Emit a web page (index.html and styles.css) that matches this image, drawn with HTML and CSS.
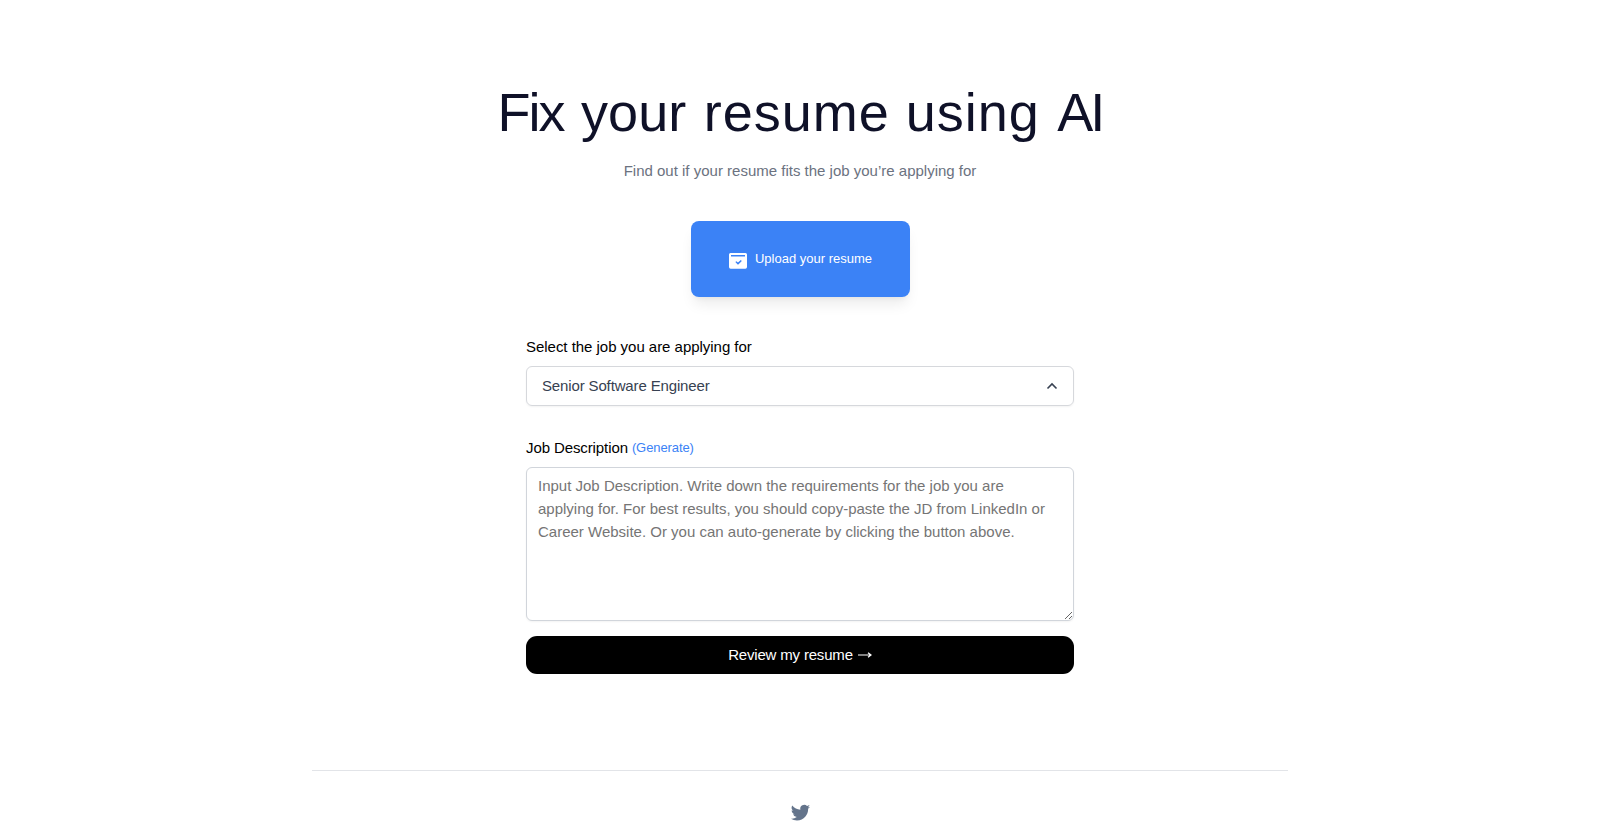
FILE: index.html
```html
<!DOCTYPE html>
<html lang="en">
<head>
<meta charset="utf-8">
<title>Fix your resume using AI</title>
<link rel="stylesheet" href="styles.css">
</head>
<body>
<main class="page">
  <h1 class="title"><span class="tight">Fix</span> your <span class="loose">resume using</span> <span class="initials">AI</span></h1>
  <p class="subtitle">Find out if your resume fits the job you’re applying for</p>
  <button class="upload" type="button">
    <svg class="upload-icon" viewBox="0 0 18 16"><path fill="#fff" fill-rule="evenodd" d="M1.500 0h15Q18 0 18 1.500V14q0 1.700-1.700 1.700H1.700Q0 15.700 0 14V1.500Q0 0 1.500 0ZM2 2v1.500h14V2ZM6.400 9l2 2.300q.6.500 1.200 0L12.800 8l-1-.9L9 9.600 7.300 8.300Z"/></svg>
    <span>Upload your resume</span>
  </button>
  <form class="form">
    <div class="label">Select the job you are applying for</div>
    <div class="select">
      <span>Senior Software Engineer</span>
      <svg class="chevron" viewBox="0 0 12 8"><path d="M1.500 6.500 6 2l4.500 4.500" fill="none" stroke="#374151" stroke-width="1.600"/></svg>
    </div>
    <div class="label label-jd"><span>Job Description</span><a class="generate">(Generate)</a></div>
    <textarea class="description" placeholder="Input Job Description. Write down the requirements for the job you are applying for. For best results, you should copy-paste the JD from LinkedIn or Career Website. Or you can auto-generate by clicking the button above."></textarea>
    <button class="submit" type="button"><span>Review my resume</span><svg class="arrow" viewBox="0 0 14 8"><path d="M0 4h13M10 1.800 13 4l-3 2.200" fill="none" stroke="#fff" stroke-width="1.200"/></svg></button>
  </form>
  <footer class="footer">
    <svg class="bird" viewBox="0 0 24 24"><path fill="#64748b" d="M8.290 20.251c7.547 0 11.675-6.253 11.675-11.675 0-.178 0-.355-.012-.53A8.348 8.348 0 0022 5.920a8.190 8.190 0 01-2.357.646 4.118 4.118 0 001.804-2.270 8.224 8.224 0 01-2.605.996 4.107 4.107 0 00-6.993 3.743 11.650 11.650 0 01-8.457-4.287 4.106 4.106 0 001.270 5.477A4.072 4.072 0 012.800 9.713v.052a4.105 4.105 0 003.292 4.022 4.095 4.095 0 01-1.853.070 4.108 4.108 0 003.834 2.850A8.233 8.233 0 012 18.407a11.616 11.616 0 006.290 1.840"/></svg>
  </footer>
</main>
</body>
</html>
```
FILE: styles.css
```css
* { box-sizing: border-box; }
body { margin: 0; background: #fff; font: 15px/23px "Liberation Sans", Arial, sans-serif; color: #000; }
.page { width: 976px; height: 834px; margin: 0 auto; display: flex; flex-direction: column; align-items: center; overflow: hidden; }
.title { margin: 83px 0 0; font-size: 54px; line-height: 58px; font-weight: 400; color: #0f1128; word-spacing: 2.5px; white-space: nowrap; }
.tight { letter-spacing: -2px; }
.loose { letter-spacing: 1px; word-spacing: 0; }
.initials { letter-spacing: -3px; }
.subtitle { margin: 18px 0 0; line-height: 23px; color: #6b7280; }
.upload { display: flex; align-items: center; justify-content: center; gap: 8px; width: 219px; height: 76px; margin: 39px 0 0; padding: 0 0 0 1px; border: 0; border-radius: 8px; background: #3b82f6; color: #fff; font: 13px/20px "Liberation Sans", Arial, sans-serif; box-shadow: 0 10px 14px -3px rgba(0,0,0,.08), 0 4px 6px -4px rgba(0,0,0,.08); }
.upload-icon { width: 18px; height: 16px; margin-top: 4px; }
.form { width: 548px; margin-top: 38px; display: flex; flex-direction: column; }
.label { line-height: 23px; letter-spacing: -.03px; }
.select { display: flex; align-items: center; justify-content: space-between; height: 40px; margin-top: 8px; padding: 0 15px 2px; border: 1px solid #d6d8dc; border-radius: 6px; color: #374151; letter-spacing: -.14px; box-shadow: 0 1px 2px rgba(0,0,0,.05); }
.chevron { width: 12px; height: 8px; margin-top: 1px; }
.label-jd { display: flex; gap: 4px; margin-top: 30px; letter-spacing: -.1px; }
.generate { color: #3b82f6; font-size: 13px; }
.description { width: 548px; height: 154px; margin: 8px 0 0; padding: 6px 11px; border: 1px solid #d1d5db; border-radius: 6px; font: 15px/23px "Liberation Sans", Arial, sans-serif; box-shadow: 0 1px 2px rgba(0,0,0,.05); resize: vertical; }
.description::placeholder { color: #757575; }
.submit { display: flex; align-items: center; justify-content: center; gap: 5px; height: 38px; margin-top: 15px; padding: 0 0 2px; border: 0; border-radius: 11px; background: #000; color: #fff; font: 15px/23px "Liberation Sans", Arial, sans-serif; letter-spacing: -.18px; }
.arrow { width: 14px; height: 8px; margin-top: 2px; }
.footer { width: 976px; margin-top: 96px; padding-top: 30px; border-top: 1px solid #e2e4e8; display: flex; justify-content: center; }
.bird { width: 23px; height: 23px; }
```
